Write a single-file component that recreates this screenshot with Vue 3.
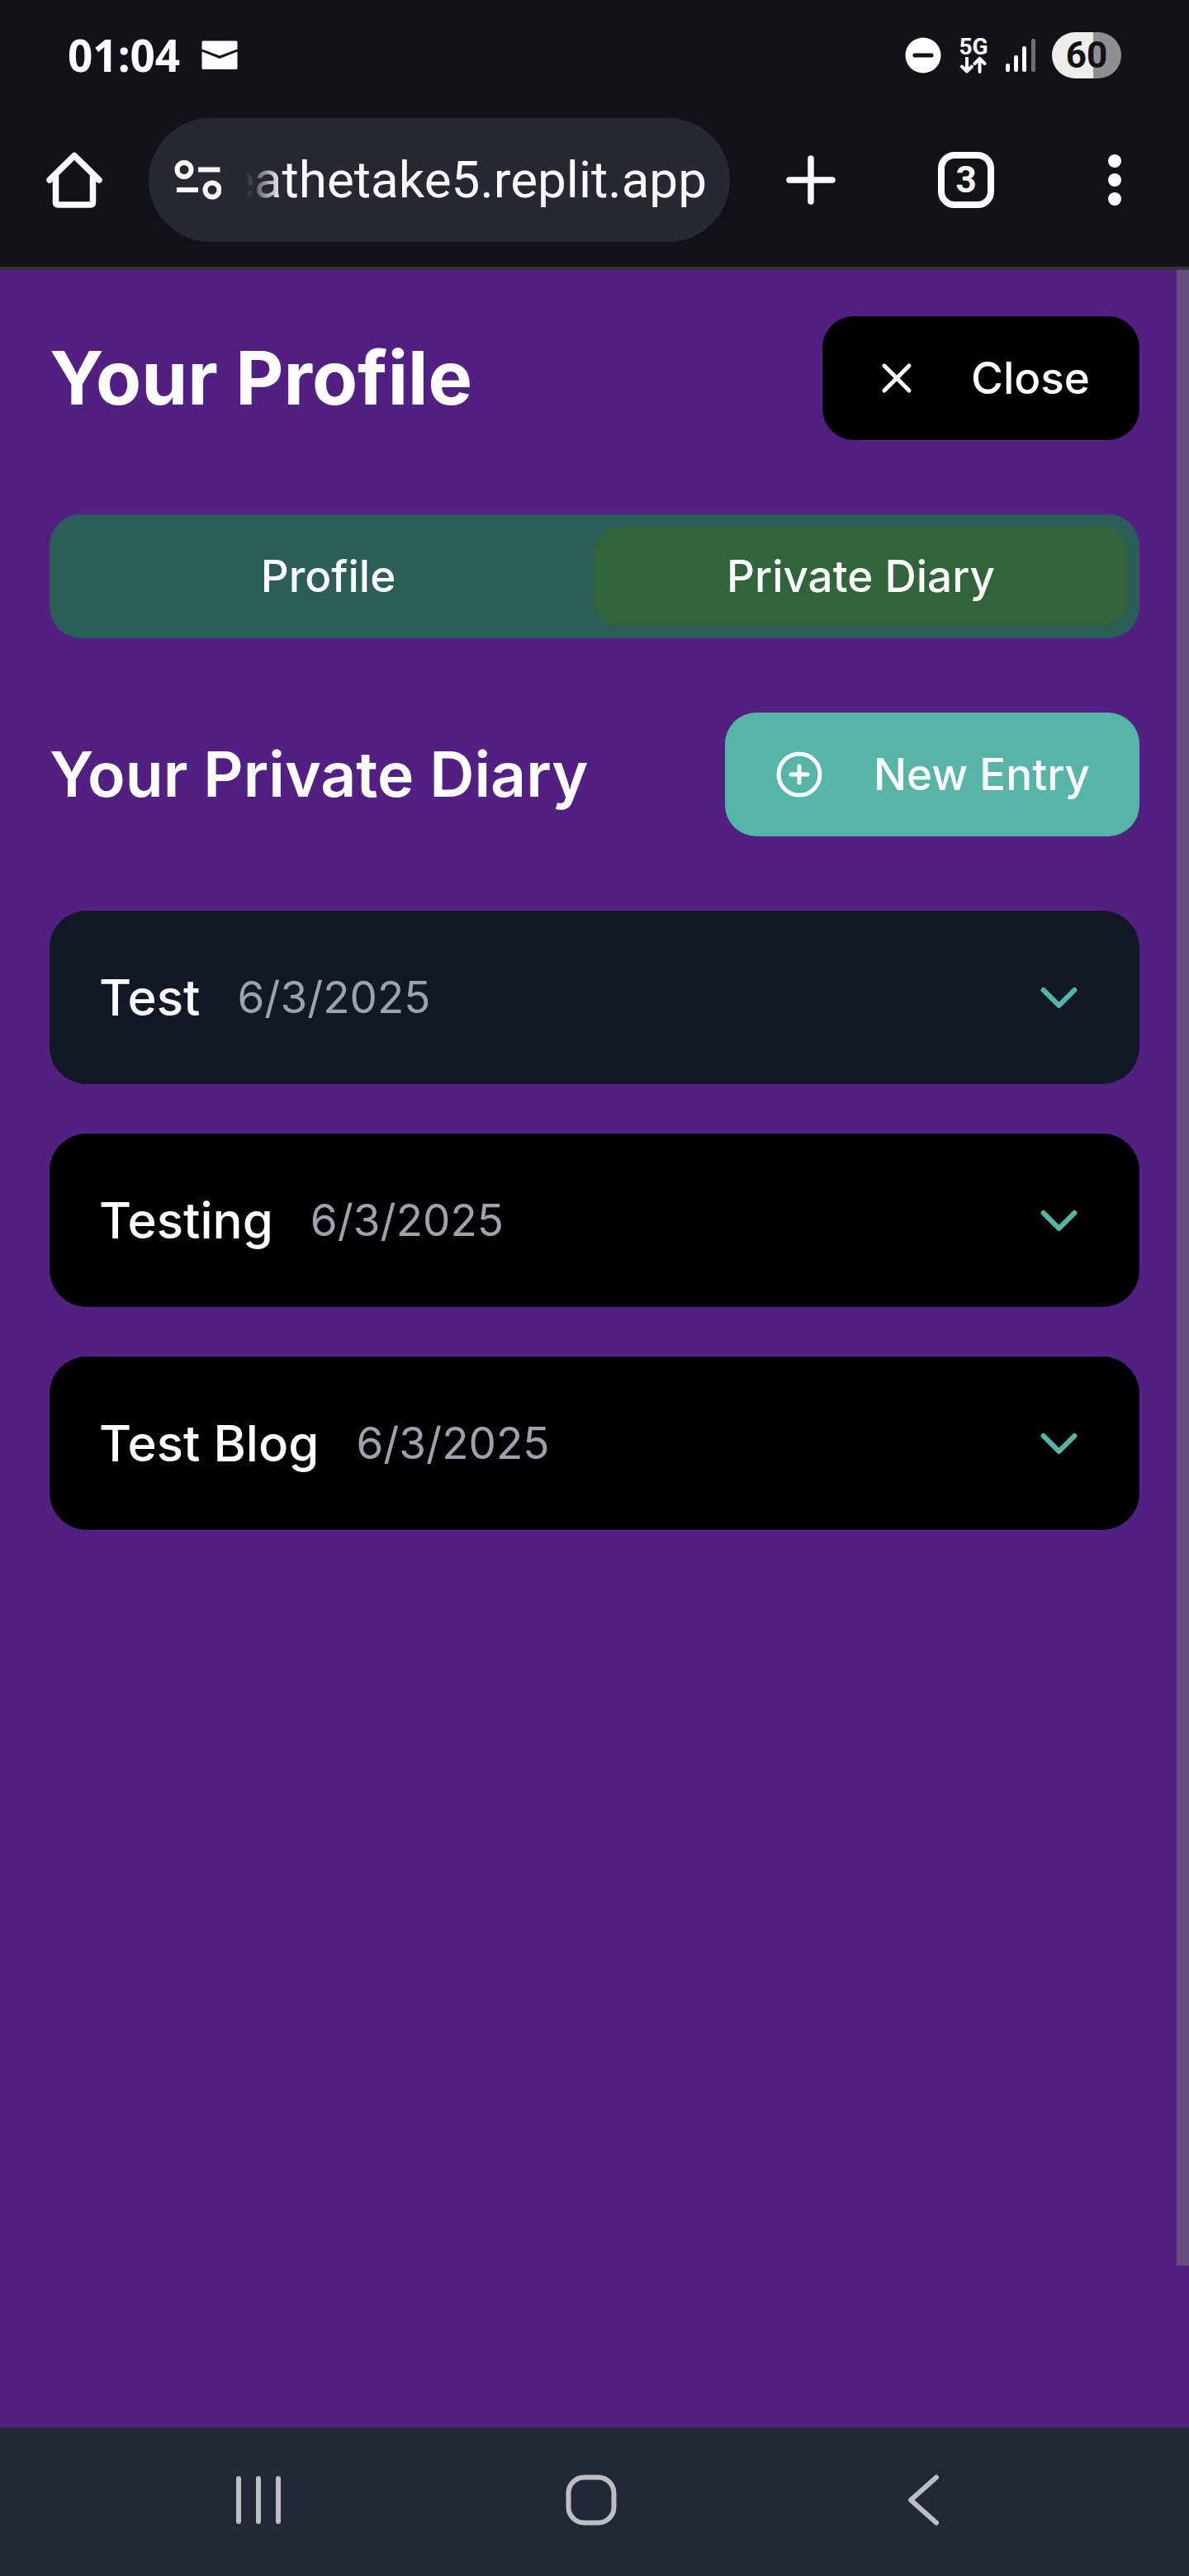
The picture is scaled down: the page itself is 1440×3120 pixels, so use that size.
<script setup>
import { ref } from 'vue'

const address = ref('eathetake5.replit.app')
const activeTab = ref('diary')
const tabs = [
  { id: 'profile', label: 'Profile' },
  { id: 'diary', label: 'Private Diary' },
]
const highlighted = ref(1)
const entries = [
  { id: 1, title: 'Test', date: '6/3/2025' },
  { id: 2, title: 'Testing', date: '6/3/2025' },
  { id: 3, title: 'Test Blog', date: '6/3/2025' },
]
</script>

<template>
  <div class="screen">
    <header class="chrome">
      <div class="status">
        <div class="status-side">
          <span class="clock">01:04</span>
          <svg class="mail" viewBox="0 0 44 36" aria-hidden="true">
            <path d="M2 0.500H42Q43.500 0.500 43.500 2V10.500L22 18.500L0.500 10.500V2Q0.500 0.500 2 0.500Z" />
            <path d="M0.500 13.500L22 22L43.500 13.500V33.500Q43.500 35 42 35H2Q0.500 35 0.500 33.500Z" />
          </svg>
        </div>
        <div class="status-side right">
          <svg class="dnd" viewBox="0 0 44 44" aria-hidden="true">
            <circle cx="22" cy="22" r="21.500" fill="#fff" />
            <rect x="9.500" y="19.500" width="25" height="5" rx="2" fill="#121318" />
          </svg>
          <div class="network">
            <span>5G</span>
            <svg viewBox="0 0 32 20" aria-hidden="true">
              <path d="M8 1V17M2 11.500L8 17.500L14 11.500M23.500 18V2M17.500 8L23.500 2L29.500 8" />
            </svg>
          </div>
          <svg class="signal" viewBox="0 0 36 40" aria-hidden="true">
            <rect x="0" y="30" width="5" height="10" rx="2" />
            <rect x="10" y="20" width="5" height="20" rx="2" />
            <rect x="20" y="9" width="5" height="31" rx="2" />
            <rect x="31" y="0" width="5" height="40" rx="2" fill="#6f7073" />
          </svg>
          <span class="battery">60</span>
        </div>
      </div>

      <div class="toolbar">
        <button class="slot" type="button" aria-label="Home">
          <svg width="68" height="68" viewBox="0 0 68 68" fill="none" stroke="#fcf9ff" stroke-width="7.500" stroke-linejoin="round" stroke-linecap="round" aria-hidden="true">
            <path d="M4 34L34 4.500L64 34" />
            <path d="M11.500 29V61Q11.500 64 14.500 64H53.500Q56.500 64 56.500 61V29" />
          </svg>
        </button>
        <div class="omnibox">
          <svg width="58" height="50" viewBox="0 0 58 50" fill="none" stroke="#fcf9ff" stroke-width="6" aria-hidden="true">
            <circle cx="13" cy="12.500" r="8.500" />
            <circle cx="47" cy="37" r="8.500" />
            <path d="M30 12.500H56.500M4 37H30" />
          </svg>
          <input v-model="address" type="text" dir="rtl" aria-label="Address" />
        </div>
        <button class="slot wide" type="button" aria-label="New tab">
          <svg width="60" height="60" viewBox="0 0 60 60" fill="none" stroke="#fcf9ff" stroke-width="7.500" stroke-linecap="round" aria-hidden="true">
            <path d="M30 4V56M4 30H56" />
          </svg>
        </button>
        <button class="slot" type="button" aria-label="Open tabs">
          <span class="tab-count">3</span>
        </button>
        <button class="slot" type="button" aria-label="Menu">
          <svg width="16" height="62" viewBox="0 0 16 62" fill="#fcf9ff" aria-hidden="true">
            <circle cx="8" cy="8" r="8" />
            <circle cx="8" cy="31" r="8" />
            <circle cx="8" cy="54" r="8" />
          </svg>
        </button>
      </div>
    </header>

    <main class="page">
      <div class="row">
        <h1>Your Profile</h1>
        <button class="btn dark" type="button">
          <svg class="icon" viewBox="0 0 24 24" aria-hidden="true">
            <path d="M18 6 6 18" />
            <path d="m6 6 12 12" />
          </svg>
          Close
        </button>
      </div>

      <div class="tabs" role="tablist">
        <button
          v-for="tab in tabs"
          :key="tab.id"
          type="button"
          role="tab"
          class="tab"
          :class="{ active: activeTab === tab.id }"
          :aria-selected="activeTab === tab.id"
          @click="activeTab = tab.id"
        >
          {{ tab.label }}
        </button>
      </div>

      <div class="row">
        <h2>Your Private Diary</h2>
        <button class="btn teal" type="button">
          <svg class="icon" viewBox="0 0 24 24" aria-hidden="true">
            <circle cx="12" cy="12" r="10" />
            <path d="M8 12h8" />
            <path d="M12 8v8" />
          </svg>
          New Entry
        </button>
      </div>

      <div class="entries">
        <button
          v-for="entry in entries"
          :key="entry.id"
          type="button"
          class="entry"
          :class="{ highlighted: highlighted === entry.id }"
          @click="highlighted = entry.id"
        >
          <span class="entry-title">{{ entry.title }}</span>
          <span class="entry-date">{{ entry.date }}</span>
          <svg class="chevron" viewBox="0 0 24 24" aria-hidden="true">
            <path d="m6 9 6 6 6-6" />
          </svg>
        </button>
      </div>

      <div class="scroll-thumb"></div>
    </main>

    <nav class="system-nav" aria-label="System">
      <button type="button" aria-label="Recent apps">
        <svg width="62" height="62" viewBox="0 0 62 62" aria-hidden="true">
          <path d="M7 5V57M31 5V57M55 5V57" />
        </svg>
      </button>
      <button type="button" aria-label="Home screen">
        <svg width="62" height="62" viewBox="0 0 62 62" aria-hidden="true">
          <rect x="3.500" y="3.500" width="55" height="55" rx="19" />
        </svg>
      </button>
      <button type="button" aria-label="Back">
        <svg width="62" height="62" viewBox="0 0 62 62" aria-hidden="true">
          <path d="M46 3.500L15 31L46 58.500" />
        </svg>
      </button>
    </nav>
  </div>
</template>

<style>
body {
  margin: 0;
  background: #521f82;
}
</style>

<style scoped>
.screen {
  display: flex;
  flex-direction: column;
  min-height: 100vh;
  font-family: Inter, sans-serif;
  color: #fff;
  background: #521f82;
}

.screen * {
  box-sizing: border-box;
}

button,
input {
  margin: 0;
  padding: 0;
  border: 0;
  background: none;
  color: inherit;
  font: inherit;
}

button {
  cursor: pointer;
}

svg {
  display: block;
  flex: none;
}

h1,
h2 {
  margin: 0;
}

.chrome {
  background: #121318;
  border-bottom: 4px solid #353539;
}

.status {
  display: flex;
  justify-content: space-between;
  align-items: center;
  height: 133px;
  padding: 0 82px;
}

.status-side {
  display: flex;
  align-items: center;
  gap: 26px;
}

.clock {
  font: 700 53px/60px "Noto Sans", sans-serif;
}

.mail {
  width: 44px;
  height: 36px;
  fill: #fff;
}

.right {
  gap: 20px;
}

.dnd {
  width: 44px;
  height: 44px;
}

.network {
  display: flex;
  flex-direction: column;
  align-items: center;
  width: 38px;
  font: 700 28px/25px Roboto, sans-serif;
}

.network svg {
  width: 32px;
  height: 20px;
  fill: none;
  stroke: #fff;
  stroke-width: 4;
  stroke-linecap: round;
  stroke-linejoin: round;
}

.signal {
  width: 36px;
  height: 40px;
  fill: #fff;
}

.battery {
  width: 84px;
  height: 56px;
  border-radius: 28px;
  background: linear-gradient(90deg, #eee 60%, #8f8f90 60%);
  color: #121318;
  font: 700 44px/56px Roboto, sans-serif;
  text-align: center;
}

.toolbar {
  display: flex;
  align-items: center;
  padding: 10px 0 30px;
}

.slot {
  display: flex;
  flex: none;
  align-items: center;
  justify-content: center;
  width: 180px;
  height: 150px;
}

.slot.wide {
  width: 196px;
}

.omnibox {
  display: flex;
  flex: 1;
  align-items: center;
  gap: 30px;
  min-width: 0;
  height: 150px;
  padding: 0 28px 0 30px;
  border-radius: 75px;
  background: #272932;
}

.omnibox input {
  flex: 1;
  min-width: 0;
  height: 90px;
  color: #fcf9ff;
  font: 400 62px/90px Roboto, sans-serif;
  mask-image: linear-gradient(90deg, transparent, #000 44px);
}

.tab-count {
  width: 68px;
  height: 68px;
  border: 8px solid #fcf9ff;
  border-radius: 20px;
  color: #fcf9ff;
  font: 700 44px/52px Roboto, sans-serif;
}

.page {
  position: relative;
  display: flex;
  flex: 1;
  flex-direction: column;
  gap: 90px;
  padding: 56px 60px 60px;
}

.row {
  display: flex;
  align-items: center;
  justify-content: space-between;
}

h1 {
  font-size: 90px;
  font-weight: 700;
  line-height: 120px;
}

h2 {
  font-size: 75px;
  font-weight: 600;
  line-height: 104px;
}

.btn {
  display: flex;
  align-items: center;
  gap: 60px;
  height: 150px;
  padding: 0 60px;
  border-radius: 38px;
  font-size: 53px;
  font-weight: 500;
  line-height: 75px;
}

.dark {
  background: #000;
}

.teal {
  background: #56b5a7;
}

.icon {
  width: 60px;
  height: 60px;
}

.icon,
.chevron {
  fill: none;
  stroke: currentColor;
  stroke-width: 2;
  stroke-linecap: round;
  stroke-linejoin: round;
}

.tabs {
  display: flex;
  height: 150px;
  padding: 15px;
  border-radius: 38px;
  background: #2b5e59;
}

.tab {
  flex: 1;
  border-radius: 30px;
  font-size: 53px;
  font-weight: 500;
  line-height: 75px;
}

.tab.active {
  background: #31643a;
}

.entries {
  display: flex;
  flex-direction: column;
  gap: 60px;
}

.entry {
  display: flex;
  align-items: center;
  gap: 45px;
  min-height: 210px;
  padding: 0 60px;
  border-radius: 45px;
  background: #000;
  text-align: left;
}

.entry.highlighted {
  background: #121825;
}

.entry-title {
  font-size: 60px;
  font-weight: 500;
  line-height: 90px;
}

.entry-date {
  color: #9ca3af;
  font-size: 53px;
  line-height: 75px;
}

.chevron {
  width: 75px;
  height: 75px;
  margin-left: auto;
  color: #56b5a7;
}

.scroll-thumb {
  position: absolute;
  top: 0;
  right: 0;
  width: 15px;
  height: 92.5%;
  background: #674d7f;
}

.system-nav {
  display: grid;
  grid-template-columns: repeat(3, 1fr);
  padding: 0 120px 4px 112px;
  background: #222936;
}

.system-nav button {
  display: flex;
  align-items: center;
  justify-content: center;
  height: 176px;
}

.system-nav svg {
  fill: none;
  stroke: #bdbec2;
  stroke-width: 6;
  stroke-linecap: round;
  stroke-linejoin: round;
}
</style>
